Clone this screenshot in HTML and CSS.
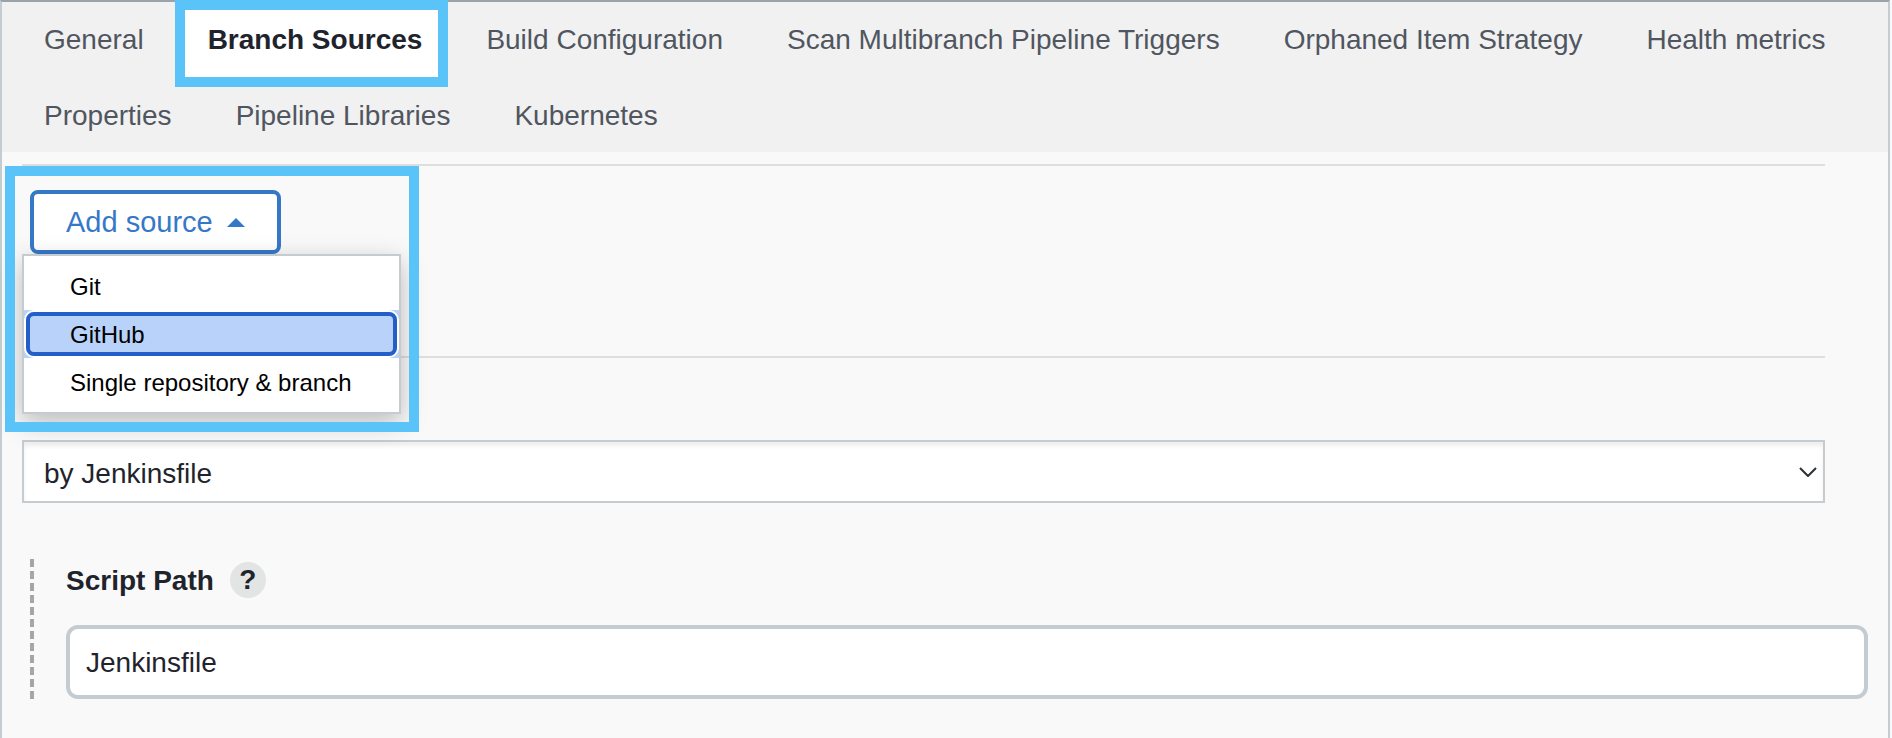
FILE: index.html
```html
<!DOCTYPE html>
<html lang="en">
<head>
<meta charset="utf-8">
<title>Branch Sources</title>
<link rel="stylesheet" href="styles.css">
</head>
<body>
<main class="panel">
  <nav class="tabs">
    <a class="tab" href="#general">General</a>
    <a class="tab tab-active" href="#branch-sources">Branch Sources</a>
    <a class="tab" href="#build">Build Configuration</a>
    <a class="tab" href="#triggers">Scan Multibranch Pipeline Triggers</a>
    <a class="tab" href="#orphaned">Orphaned Item Strategy</a>
    <a class="tab" href="#health">Health metrics</a>
    <a class="tab" href="#properties">Properties</a>
    <a class="tab" href="#libraries">Pipeline Libraries</a>
    <a class="tab" href="#kubernetes">Kubernetes</a>
  </nav>
  <form class="content">
    <section class="sources">
      <button class="add-source" type="button" aria-expanded="true">Add source
        <svg class="caret" viewBox="0 0 18 9" aria-hidden="true"><path d="M0 9 L9 0 L18 9 Z" fill="currentColor"/></svg>
      </button>
      <div class="menu">
        <button class="menu-item" type="button">Git</button>
        <button class="menu-item menu-item-focus" type="button"><span class="ring">GitHub</span></button>
        <button class="menu-item" type="button">Single repository &amp; branch</button>
      </div>
      <div class="highlight"></div>
    </section>
    <section class="mode">
      <select class="mode-select" aria-label="Mode"><option>by Jenkinsfile</option></select>
      <svg class="chevron" viewBox="0 0 18 10" aria-hidden="true"><path d="M1 1 L9 9 L17 1" fill="none" stroke="currentColor" stroke-width="2"/></svg>
    </section>
    <section class="script">
      <svg class="dashes" aria-hidden="true"><line x1="2" y1="0" x2="2" y2="100%" stroke="#a6a6a6" stroke-width="4" stroke-dasharray="8 4"/></svg>
      <div class="field">
        <div class="field-head">
          <label class="field-label" for="script-path">Script Path</label>
          <button class="help" type="button" aria-label="Help">?</button>
        </div>
        <input class="text-input" id="script-path" type="text" value="Jenkinsfile">
      </div>
    </section>
  </form>
</main>
</body>
</html>
```
FILE: styles.css
```css
* { box-sizing: border-box; }

body {
  margin: 0;
  background: #f9f9f9;
  color: #1f242c;
  font: 28px/32px "Liberation Sans", Arial, sans-serif;
}

button, input, select { font: inherit; color: inherit; margin: 0; }

.panel {
  min-height: 100vh;
  margin-right: 2px;
  border: 2px solid #c4ccd2;
  border-top-color: #98a3ab;
  border-bottom: 0;
}

.tabs {
  display: flex;
  flex-wrap: wrap;
  row-gap: 2px;
  padding: 0 10px;
  background: #f1f1f1;
}

.tab {
  height: 74px;
  padding: 22px 32px;
  color: #50565f;
  text-decoration: none;
  white-space: nowrap;
}

.tab-active {
  position: relative;
  z-index: 1;
  color: #1f242c;
  font-weight: bold;
}

.tab-active::before {
  content: "";
  position: absolute;
  z-index: -1;
  inset: -2px 6px -11px -1px;
  border: 10px solid #5ac3f8;
  background: #fff;
}

.content { padding: 12px 20px 0; }

.sources {
  position: relative;
  height: 194px;
  margin-right: 43px;
  padding: 24px 8px 0;
  border-top: 2px solid #dedede;
  border-bottom: 2px solid #dedede;
}

.add-source {
  display: flex;
  align-items: center;
  gap: 14px;
  min-width: 251px;
  height: 64px;
  padding: 0 32px;
  border: 4px solid #3678c8;
  border-radius: 8px;
  background: #fff;
  color: #3678c8;
  font-size: 29px;
}

.caret { width: 18px; height: 9px; }

.menu {
  position: absolute;
  z-index: 1;
  top: 88px;
  left: 0;
  width: 379px;
  padding: 6px 0;
  border: 2px solid #c4ccd2;
  background: #fff;
  box-shadow: 0 8px 24px rgba(0, 0, 0, 0.25);
}

.menu-item {
  display: block;
  width: 100%;
  height: 48px;
  padding: 2px 46px 0;
  border: 0;
  background: none;
  color: #000;
  font-size: 24px;
  text-align: left;
}

.menu-item-focus {
  padding: 0;
  background: #b9d2f9;
}

.ring {
  display: flex;
  align-items: center;
  height: 44px;
  margin: 2px;
  padding: 2px 40px 0;
  border: 4px solid #245fc9;
  border-radius: 8px;
  box-shadow: 0 0 0 2px #fff;
}

.highlight {
  position: absolute;
  z-index: 2;
  top: 0;
  left: -17px;
  width: 414px;
  height: 266px;
  border: 10px solid #5ac3f8;
  pointer-events: none;
}

.mode {
  display: grid;
  align-items: center;
  margin: 82px 43px 0 0;
}

.mode-select, .chevron { grid-area: 1 / 1; }

.mode-select {
  width: 100%;
  height: 63px;
  padding: 4px 20px 0;
  border: 2px solid #c4ccd2;
  border-radius: 0;
  background: #fff;
  box-shadow: inset 0 4px 4px rgba(0, 0, 0, 0.07);
  appearance: none;
}

.chevron {
  justify-self: end;
  width: 18px;
  height: 10px;
  margin-right: 8px;
  color: #2b2f33;
}

.script {
  display: flex;
  gap: 32px;
  margin-top: 56px;
  padding-left: 8px;
}

.dashes { width: 4px; height: 140px; }

.field { flex: 1; }

.field-head {
  display: flex;
  align-items: center;
  gap: 16px;
  height: 42px;
  margin-bottom: 24px;
}

.field-label {
  padding-top: 2px;
  font-weight: bold;
}

.help {
  width: 36px;
  height: 36px;
  padding: 0;
  border: 0;
  border-radius: 50%;
  background: #e3e5e4;
  font-weight: bold;
}

.text-input {
  display: block;
  width: 100%;
  height: 74px;
  padding: 2px 16px 0;
  border: 4px solid #c4ccd2;
  border-radius: 12px;
  background: #fff;
}
```
